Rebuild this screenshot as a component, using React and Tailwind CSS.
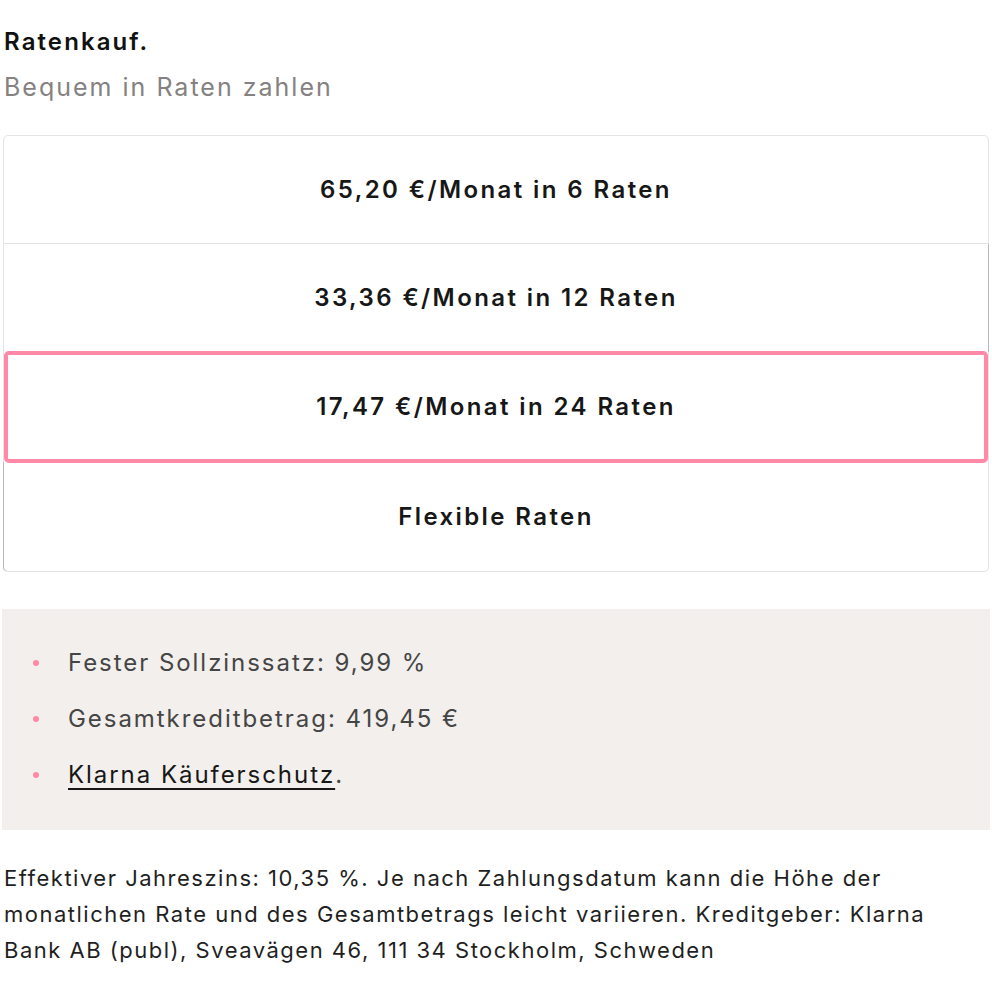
export default function App() {
  const rows = [
    "65,20 €/Monat in 6 Raten",
    "33,36 €/Monat in 12 Raten",
    "17,47 €/Monat in 24 Raten",
    "Flexible Raten",
  ];
  const rowClass = [
    "h-[108px] border-b border-[#e4e4e4]",
    "h-[108px] shadow-[1px_0_0_#b9b9b9]",
    "h-[112px] my-[-1px] border-[4px] border-[#ff89a7] rounded-[5px] relative",
    "h-[109px] shadow-[-1px_0_0_#b9b9b9] rounded-bl-[4px]",
  ];
  return (
    <div className="w-[992px] h-[984px] bg-white text-[#171717]" style={{ fontFamily: "Inter, 'Noto Sans', sans-serif" }}>
      <div className="pl-[4px] pr-[3px] pt-[26px]">
        <div className="text-[24px] leading-[32px] font-semibold tracking-[2.1px] text-[#111]">Ratenkauf.</div>
        <div className="mt-[13px] text-[25px] leading-[32px] tracking-[2px] text-[#858180]">Bequem in Raten zahlen</div>

        <div className="mt-[32px] ml-[-1px] border border-[#e4e4e4] rounded-[5px] flex flex-col">
          {rows.map((r, i) => (
            <div
              key={i}
              className={rowClass[i] + " flex items-center justify-center text-[24px] font-semibold tracking-[2.4px]"}
            >
              {r}
            </div>
          ))}
        </div>

        <div className="mt-[37px] ml-[-2px] mr-[-1px] bg-[#f2efec] pt-[26px] pb-[27px] pl-[30px]">
          {[
            "Fester Sollzinssatz: 9,99 %",
            "Gesamtkreditbetrag: 419,45 €",
          ].map((t, i) => (
            <div key={i} className="flex items-center h-[56px] text-[24px] tracking-[1.95px] text-[#454545]">
              <span className="w-[6px] h-[6px] rounded-full bg-[#ff89a7] mr-[29px] ml-[1px]"></span>
              {t}
            </div>
          ))}
          <div className="flex items-center h-[56px] text-[24px] tracking-[1.95px] text-[#454545]">
            <span className="w-[6px] h-[6px] rounded-full bg-[#ff89a7] mr-[29px] ml-[1px]"></span>
            <span className="underline underline-offset-[5px] decoration-[2px] text-[#171717]">Klarna Käuferschutz</span>.
          </div>
        </div>

        <div className="mt-[30px] text-[22px] leading-[36px] tracking-[1.5px] text-[#1f1f1f]">
          Effektiver Jahreszins: 10,35 %. Je nach Zahlungsdatum kann die Höhe der monatlichen Rate und des Gesamtbetrags leicht variieren. Kreditgeber: Klarna Bank AB (publ), Sveavägen 46, 111 34 Stockholm, Schweden
        </div>
      </div>
    </div>
  );
}
